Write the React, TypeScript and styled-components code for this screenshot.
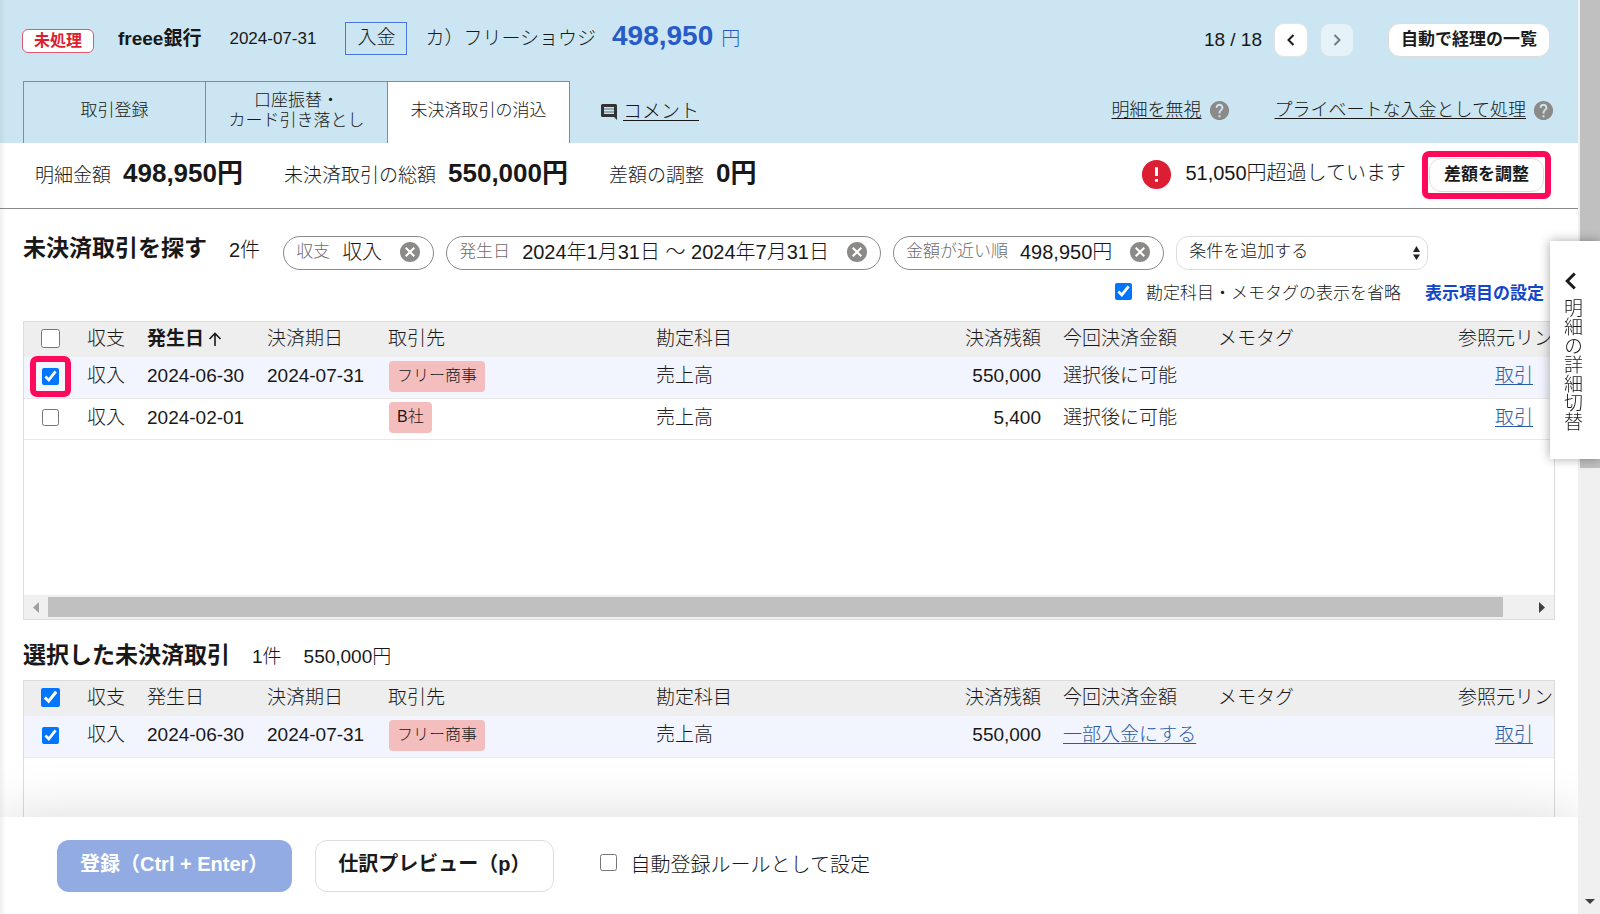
import React from "react";
import styled, { createGlobalStyle, css } from "styled-components";
import { MdCancel, MdError, MdHelp } from "react-icons/md";

const GlobalStyle = createGlobalStyle`
  *, *::before, *::after { box-sizing: border-box; }
  body {
    margin: 0;
    background: #fff;
    color: #181818;
    font-family: "Liberation Sans", "Noto Sans CJK JP", sans-serif;
    font-size: 19px;
    font-weight: 300;
    line-height: 24px;
  }
  button, select, input { font: inherit; color: inherit; margin: 0; }
  h2 { margin: 0; }
  svg { display: block; flex: none; }
`;

const Page = styled.div`
  display: flex;
  height: 100vh;
  overflow: hidden;
`;

const Main = styled.main`
  position: relative;
  display: flex;
  flex: 1;
  flex-direction: column;
  min-width: 0;
  overflow: hidden;

  &::before {
    content: "";
    position: absolute;
    z-index: 3;
    inset: 0 auto 0 0;
    width: 6px;
    background: linear-gradient(to right, rgba(0, 0, 0, 0.06), rgba(0, 0, 0, 0));
    pointer-events: none;
  }
`;

const Header = styled.header`
  background: #cbe6f2;
  flex: none;
`;

const HeaderTop = styled.div`
  display: flex;
  align-items: center;
  height: 81px;
  padding: 0 28px 0 22px;
`;

const StatusBadge = styled.span`
  width: 72px;
  height: 24px;
  border: 1px solid #dc5a6e;
  border-radius: 6px;
  background: #fff;
  color: #dc1e32;
  font-size: 16px;
  font-weight: 700;
  line-height: 22px;
  text-align: center;
`;

const BankName = styled.span`
  margin-left: 24px;
  padding-bottom: 4px;
  font-weight: 700;
`;

const EntryDate = styled.span`
  margin-left: 28px;
  padding-bottom: 4px;
  font-size: 17px;
`;

const Entry = styled.div`
  display: flex;
  align-items: center;
  margin-left: 29px;
  padding-bottom: 4px;
`;

const Direction = styled.span`
  width: 62px;
  height: 33px;
  border: 1px solid #4a78d8;
  line-height: 29px;
  text-align: center;
`;

const Payer = styled.span`
  margin-left: 18px;
`;

const Amount = styled.span`
  display: flex;
  align-items: baseline;
  gap: 8px;
  margin-left: 16px;
  padding-bottom: 2px;
  color: #285ac8;
`;

const AmountNumber = styled.strong`
  font-size: 28px;
  font-weight: 700;
`;

const Pager = styled.nav`
  display: flex;
  align-items: center;
  gap: 12px;
  margin-left: auto;
  padding-bottom: 2px;
`;

const PagerButton = styled.button`
  display: grid;
  place-items: center;
  width: 34px;
  height: 34px;
  padding: 0;
  border: 1px solid #e0e4e6;
  border-radius: 10px;
  background: #fff;

  &:disabled {
    opacity: 0.5;
  }
`;

const OutlineButton = styled.button<{ $size?: "small" | "large" }>`
  border: 1px solid #e1dcdc;
  background: #fff;
  color: #1a1a1a;
  font-weight: 700;
  white-space: nowrap;
  ${({ $size }) =>
    $size === "large"
      ? css`
          height: 52px;
          padding: 0 22px 4px;
          border-radius: 12px;
          font-size: 20px;
        `
      : css`
          height: 34px;
          padding: 0 12px;
          border-radius: 12px;
          font-size: 17px;
        `}
`;

const ListButton = styled(OutlineButton)`
  margin-left: 22px;
`;

const HeaderBottom = styled.div`
  display: flex;
  align-items: stretch;
  height: 62px;
  padding: 0 23px;
`;

const Tabs = styled.div`
  display: flex;
  border-left: 1px solid #8c8989;
`;

const Tab = styled.button<{ $active?: boolean }>`
  width: 182px;
  padding: 0 0 4px;
  border: solid #8c8989;
  border-width: 1px 1px 0 0;
  background: ${({ $active }) => ($active ? "#fff" : "transparent")};
  font-size: 17px;
  line-height: 20px;
`;

const PlainLink = styled.a`
  color: inherit;
  text-underline-offset: 2px;
  text-decoration-thickness: 1px;
`;

const CommentLink = styled.div`
  display: flex;
  align-items: center;
  gap: 6px;
  margin-left: 31px;
`;

const HeaderLinks = styled.div`
  display: flex;
  align-items: center;
  gap: 44px;
  margin-left: auto;
  padding-bottom: 4px;
  font-size: 18px;
`;

const HelpLink = styled.span`
  display: flex;
  align-items: center;
  gap: 6px;

  svg {
    color: #8c8989;
  }
`;

const SummaryBar = styled.section`
  display: flex;
  flex: none;
  align-items: center;
  gap: 41px;
  height: 66px;
  padding: 0 28px 2px 35px;
  border-bottom: 1px solid #8c8989;
`;

const SummaryItem = styled.div`
  display: flex;
  align-items: baseline;
  gap: 12px;
`;

const SummaryValue = styled.strong`
  font-size: 26px;
  font-weight: 700;
`;

const Warning = styled.div`
  display: flex;
  align-items: center;
  margin-left: auto;
  padding-right: 6px;
  font-size: 20px;

  > svg {
    margin-right: 11px;
    color: #dc1e32;
  }
`;

const WarningText = styled.span`
  padding-bottom: 4px;
`;

const highlightFrame = css`
  content: "";
  position: absolute;
  z-index: 2;
  border: 6px solid #ff0a5a;
  border-radius: 7px;
  pointer-events: none;
`;

const HighlightedAction = styled.span`
  position: relative;
  display: flex;
  margin-left: 23px;

  &::after {
    ${highlightFrame}
    inset: -7px;
  }

  button {
    padding: 0 14px;
  }
`;

const Content = styled.div`
  display: flex;
  flex: 1;
  flex-direction: column;
  min-height: 0;
  padding: 27px 23px 0;
  overflow: hidden;
`;

const FilterRow = styled.div`
  display: flex;
  flex: none;
  align-items: flex-start;
`;

const SectionTitle = styled.h2`
  font-size: 23px;
  font-weight: 700;
  line-height: 24px;
`;

const ResultCount = styled.span`
  margin: 0 23px 0 22px;
  font-size: 20px;
  line-height: 28px;
`;

const Filters = styled.div`
  display: flex;
  gap: 12px;
`;

const Chip = styled.span`
  display: flex;
  align-items: center;
  height: 34px;
  padding: 0 11px 2px 12px;
  border: 1px solid #8c8989;
  border-radius: 17px;
  font-size: 20px;
  white-space: nowrap;
`;

const ChipLabel = styled.span`
  margin-right: 12px;
  color: #6e6b6b;
  font-size: 17px;
`;

const ChipClose = styled.button`
  margin-left: 16px;
  padding: 0;
  border: 0;
  background: none;
  color: #8c8989;
`;

const SelectBox = styled.label`
  position: relative;
  display: block;

  svg {
    position: absolute;
    top: 10px;
    right: 8px;
    pointer-events: none;
  }
`;

const Select = styled.select`
  appearance: none;
  width: 252px;
  height: 34px;
  padding: 0 24px 2px 12px;
  border: 1px solid #e1dcdc;
  border-radius: 12px;
  background: #fff;
  font-size: 17px;
`;

const OptionsRow = styled.div`
  display: flex;
  flex: none;
  align-items: center;
  justify-content: flex-end;
  gap: 24px;
  height: 28px;
  margin: 10px 11px 13px 0;
  font-size: 17px;
`;

const Checkbox = styled.input.attrs({ type: "checkbox" })<{ $size?: number }>`
  display: block;
  width: ${({ $size = 17 }) => $size}px;
  height: ${({ $size = 17 }) => $size}px;
  accent-color: #0075ff;
`;

const CheckLabel = styled.label`
  display: flex;
  align-items: center;
  gap: 14px;

  ${Checkbox} {
    margin-bottom: 5px;
  }
`;

const SettingsLink = styled.a`
  color: #1446c8;
  font-weight: 700;
  text-decoration: none;
`;

const TableBox = styled.div<{ $height: number }>`
  display: flex;
  flex: none;
  flex-direction: column;
  height: ${({ $height }) => $height}px;
  border: 1px solid #dcdcdc;
  overflow: hidden;
`;

const Table = styled.table`
  width: calc(100% + 27px);
  table-layout: fixed;
  border-collapse: collapse;
  font-size: 19px;
  white-space: nowrap;
`;

const HeadRow = styled.tr`
  height: 35px;
  background: #eee;
`;

const BodyRow = styled.tr<{ $selected?: boolean }>`
  height: 41px;
  border-bottom: 1px solid #e9e7e7;
  background: ${({ $selected }) => ($selected ? "#f2f5fd" : "#fff")};
`;

type Align = "left" | "center" | "right";

const cellStyle = css<{ $align?: Align }>`
  padding: 0 11px 2px;
  text-align: ${({ $align = "left" }) => $align};
`;

const HeadCell = styled.th<{ $align?: Align; $sorted?: boolean }>`
  ${cellStyle}
  font-weight: ${({ $sorted }) => ($sorted ? 700 : 300)};
`;

const Cell = styled.td<{ $align?: Align }>`
  ${cellStyle}
`;

const CheckHolder = styled.span<{ $highlighted?: boolean }>`
  position: relative;
  display: flex;
  justify-content: center;
  width: 19px;
  margin-left: 6px;

  &::after {
    ${({ $highlighted }) => $highlighted && highlightFrame}
    inset: -12px -11px;
  }
`;

const SortLabel = styled.span`
  display: flex;
  align-items: center;
  gap: 4px;
`;

const Tag = styled.span`
  display: inline-block;
  height: 31px;
  margin-left: 1px;
  padding: 0 8px;
  border-radius: 4px;
  background: #f4bebe;
  font-size: 16px;
  line-height: 29px;
  vertical-align: middle;
`;

const TableLink = styled.a`
  color: #285aa5;
  text-underline-offset: 2px;
  text-decoration-thickness: 1px;
`;

const HorizontalBar = styled.div`
  display: flex;
  align-items: center;
  justify-content: space-between;
  height: 24px;
  margin-top: auto;
  padding: 0 9px;
  background: #f0f0f0;
`;

const HorizontalThumb = styled.div`
  flex: 1;
  height: 20px;
  margin: 0 36px 0 9px;
  background: #c0c0c0;
`;

const SelectedHead = styled.div`
  display: flex;
  flex: none;
  align-items: baseline;
  gap: 22px;
  height: 60px;
  padding-top: 23px;
`;

const Footer = styled.footer`
  position: relative;
  z-index: 2;
  display: flex;
  flex: none;
  align-items: center;
  height: 97px;
  padding: 0 57px;
  background: #fff;
  box-shadow: 0 0 56px rgba(0, 0, 0, 0.15);
  font-size: 20px;
`;

const PrimaryButton = styled.button`
  height: 52px;
  margin-right: 23px;
  padding: 0 24px 4px 23px;
  border: 0;
  border-radius: 12px;
  background: #93abe3;
  color: #fff;
  font-weight: 700;
  text-align: left;
`;

const RuleOption = styled.div`
  margin-left: 46px;
  padding-bottom: 2px;
`;

const PageScroll = styled.div`
  display: flex;
  flex: none;
  flex-direction: column;
  justify-content: space-between;
  align-items: center;
  width: 22px;
  padding: 0 0 10px 2px;
  background: #f0f0f0;
`;

const PageThumb = styled.div`
  width: 20px;
  height: 468px;
  background: #c0c0c0;
`;

const SideToggle = styled.button`
  position: fixed;
  z-index: 4;
  top: 241px;
  right: 0;
  display: flex;
  flex-direction: column;
  align-items: center;
  gap: 8px;
  width: 50px;
  height: 218px;
  padding: 31px 8px 0 0;
  border: 0;
  background: #fff;
  box-shadow: 0 0 10px rgba(0, 0, 0, 0.35);
`;

const VerticalText = styled.span`
  writing-mode: vertical-rl;
`;

const Chevron = ({ right = false, large = false }: { right?: boolean; large?: boolean }) => (
  <svg width={large ? 12 : 8} height={large ? 18 : 12} viewBox="0 0 8 12" fill="none" stroke="#1a1a1a" strokeWidth="2" aria-hidden="true">
    <path d={right ? "M1.5 1 6.5 6 1.5 11" : "M6.5 1 1.5 6 6.5 11"} />
  </svg>
);

const CommentIcon = () => (
  <svg width="16" height="16" viewBox="0 0 16 16" aria-hidden="true">
    <path fill="#333" fillRule="evenodd" d="M1.5 0h13A1.5 1.5 0 0 1 16 1.5V16l-3-3H1.5A1.5 1.5 0 0 1 0 11.5v-10A1.5 1.5 0 0 1 1.5 0zM3 3v1.3h10V3zM3 5.8v1.4h10V5.8zM3 8.7V10h10V8.7z" />
    <path fill="#cbe6f2" opacity=".55" d="M3 3h10v7H3z" />
  </svg>
);

const SortArrow = () => (
  <svg width="14" height="14" viewBox="0 0 14 14" fill="none" stroke="#1a1a1a" strokeWidth="1.6" aria-hidden="true">
    <path d="M7 14V1.5M1.5 7 7 1.5 12.5 7" />
  </svg>
);

const Triangle = ({ direction }: { direction: "left" | "right" | "down" }) => {
  const paths = { left: "M6 0v11L0 5.5z", right: "M0 0v11l6-5.5z", down: "M0 0h10L5 5z" };
  return (
    <svg
      width={direction === "down" ? 10 : 6}
      height={direction === "down" ? 5 : 11}
      fill={direction === "left" ? "#a0a0a0" : "#404040"}
      aria-hidden="true"
    >
      <path d={paths[direction]} />
    </svg>
  );
};

const filters = [
  { label: "収支", value: "収入" },
  { label: "発生日", value: "2024年1月31日 ～ 2024年7月31日" },
  { label: "金額が近い順", value: "498,950円" },
];

interface Deal {
  date: string;
  due: string;
  partner: string;
  balance: string;
  settlement: string;
  settlementLink?: boolean;
  checked?: boolean;
  highlighted?: boolean;
}

const openDeals: Deal[] = [
  { date: "2024-06-30", due: "2024-07-31", partner: "フリー商事", balance: "550,000", settlement: "選択後に可能", checked: true, highlighted: true },
  { date: "2024-02-01", due: "", partner: "B社", balance: "5,400", settlement: "選択後に可能" },
];

const selectedDeals: Deal[] = [
  { date: "2024-06-30", due: "2024-07-31", partner: "フリー商事", balance: "550,000", settlement: "一部入金にする", settlementLink: true, checked: true },
];

const DealTable = ({ deals, sorted, allChecked }: { deals: Deal[]; sorted?: boolean; allChecked?: boolean }) => (
  <Table>
    <colgroup>
      <col width="52" />
      <col width="60" />
      <col width="120" />
      <col width="121" />
      <col width="268" />
      <col />
      <col width="155" />
      <col width="155" />
      <col width="240" />
      <col width="134" />
    </colgroup>
    <thead>
      <HeadRow>
        <HeadCell>
          <CheckHolder>
            <Checkbox $size={19} defaultChecked={allChecked} aria-label="すべて選択" />
          </CheckHolder>
        </HeadCell>
        <HeadCell>収支</HeadCell>
        <HeadCell $sorted={sorted}>
          <SortLabel>発生日{sorted && <SortArrow />}</SortLabel>
        </HeadCell>
        <HeadCell>決済期日</HeadCell>
        <HeadCell>取引先</HeadCell>
        <HeadCell>勘定科目</HeadCell>
        <HeadCell $align="right">決済残額</HeadCell>
        <HeadCell>今回決済金額</HeadCell>
        <HeadCell>メモタグ</HeadCell>
        <HeadCell $align="center">参照元リンク</HeadCell>
      </HeadRow>
    </thead>
    <tbody>
      {deals.map((deal) => (
        <BodyRow key={deal.date} $selected={deal.checked}>
          <Cell>
            <CheckHolder $highlighted={deal.highlighted}>
              <Checkbox defaultChecked={deal.checked} aria-label={`${deal.partner}を選択`} />
            </CheckHolder>
          </Cell>
          <Cell>収入</Cell>
          <Cell>{deal.date}</Cell>
          <Cell>{deal.due}</Cell>
          <Cell>
            <Tag>{deal.partner}</Tag>
          </Cell>
          <Cell>売上高</Cell>
          <Cell $align="right">{deal.balance}</Cell>
          <Cell>{deal.settlementLink ? <TableLink href="#partial">{deal.settlement}</TableLink> : deal.settlement}</Cell>
          <Cell />
          <Cell $align="center">
            <TableLink href="#deal">取引</TableLink>
          </Cell>
        </BodyRow>
      ))}
    </tbody>
  </Table>
);

export default function App() {
  return (
    <Page>
      <GlobalStyle />
      <Main>
        <Header>
          <HeaderTop>
            <StatusBadge>未処理</StatusBadge>
            <BankName>freee銀行</BankName>
            <EntryDate>2024-07-31</EntryDate>
            <Entry>
              <Direction>入金</Direction>
              <Payer>カ）フリーショウジ</Payer>
              <Amount>
                <AmountNumber>498,950</AmountNumber>円
              </Amount>
            </Entry>
            <Pager>
              <span>18 / 18</span>
              <PagerButton aria-label="前へ">
                <Chevron />
              </PagerButton>
              <PagerButton aria-label="次へ" disabled>
                <Chevron right />
              </PagerButton>
              <ListButton>自動で経理の一覧</ListButton>
            </Pager>
          </HeaderTop>
          <HeaderBottom>
            <Tabs role="tablist">
              <Tab role="tab">取引登録</Tab>
              <Tab role="tab">
                口座振替・
                <br />
                カード引き落とし
              </Tab>
              <Tab role="tab" aria-selected $active>
                未決済取引の消込
              </Tab>
            </Tabs>
            <CommentLink>
              <CommentIcon />
              <PlainLink href="#comment">コメント</PlainLink>
            </CommentLink>
            <HeaderLinks>
              <HelpLink>
                <PlainLink href="#ignore">明細を無視</PlainLink>
                <MdHelp size={23} />
              </HelpLink>
              <HelpLink>
                <PlainLink href="#private">プライベートな入金として処理</PlainLink>
                <MdHelp size={23} />
              </HelpLink>
            </HeaderLinks>
          </HeaderBottom>
        </Header>

        <SummaryBar>
          <SummaryItem>
            明細金額 <SummaryValue>498,950円</SummaryValue>
          </SummaryItem>
          <SummaryItem>
            未決済取引の総額 <SummaryValue>550,000円</SummaryValue>
          </SummaryItem>
          <SummaryItem>
            差額の調整 <SummaryValue>0円</SummaryValue>
          </SummaryItem>
          <Warning>
            <MdError size={35} />
            <WarningText>51,050円超過しています</WarningText>
            <HighlightedAction>
              <OutlineButton>差額を調整</OutlineButton>
            </HighlightedAction>
          </Warning>
        </SummaryBar>

        <Content>
          <FilterRow>
            <SectionTitle>未決済取引を探す</SectionTitle>
            <ResultCount>2件</ResultCount>
            <Filters>
              {filters.map((filter) => (
                <Chip key={filter.label}>
                  <ChipLabel>{filter.label}</ChipLabel>
                  {filter.value}
                  <ChipClose aria-label={`${filter.label}を解除`}>
                    <MdCancel size={24} />
                  </ChipClose>
                </Chip>
              ))}
              <SelectBox>
                <Select aria-label="条件">
                  <option>条件を追加する</option>
                </Select>
                <svg width="7" height="14" fill="#222" aria-hidden="true">
                  <path d="M3.5 0 7 6H0zM3.5 14 7 8.5H0z" />
                </svg>
              </SelectBox>
            </Filters>
          </FilterRow>
          <OptionsRow>
            <CheckLabel>
              <Checkbox defaultChecked />
              勘定科目・メモタグの表示を省略
            </CheckLabel>
            <SettingsLink href="#columns">表示項目の設定</SettingsLink>
          </OptionsRow>
          <TableBox $height={299}>
            <DealTable deals={openDeals} sorted />
            <HorizontalBar>
              <Triangle direction="left" />
              <HorizontalThumb />
              <Triangle direction="right" />
            </HorizontalBar>
          </TableBox>
          <SelectedHead>
            <SectionTitle>選択した未決済取引</SectionTitle>
            <span>1件</span>
            <span>550,000円</span>
          </SelectedHead>
          <TableBox $height={299}>
            <DealTable deals={selectedDeals} allChecked />
          </TableBox>
        </Content>

        <Footer>
          <PrimaryButton>登録（Ctrl + Enter）</PrimaryButton>
          <OutlineButton $size="large">仕訳プレビュー（p）</OutlineButton>
          <RuleOption>
            <CheckLabel>
              <Checkbox />
              自動登録ルールとして設定
            </CheckLabel>
          </RuleOption>
        </Footer>
      </Main>
      <PageScroll>
        <PageThumb />
        <Triangle direction="down" />
      </PageScroll>
      <SideToggle>
        <Chevron large />
        <VerticalText>明細の詳細切替</VerticalText>
      </SideToggle>
    </Page>
  );
}
